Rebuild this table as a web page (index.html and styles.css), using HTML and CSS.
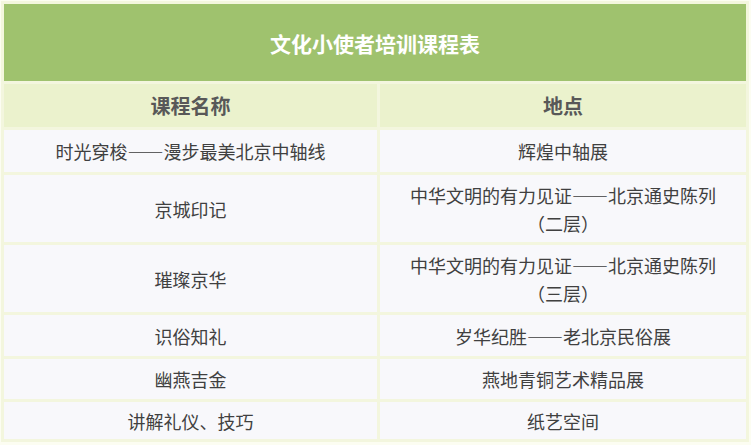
FILE: index.html
```html
<!DOCTYPE html>
<html lang="zh-CN">
<head>
<meta charset="utf-8">
<title>文化小使者培训课程表</title>
<link rel="stylesheet" href="styles.css">
</head>
<body>
<div class="wrap">
<table class="course">
  <colgroup><col class="c1"><col class="c2"></colgroup>
  <thead>
    <tr class="r-title"><th colspan="2" class="title">文化小使者培训课程表</th></tr>
    <tr class="r-head"><th class="head">课程名称</th><th class="head">地点</th></tr>
  </thead>
  <tbody>
    <tr class="r1"><td>时光穿梭——漫步最美北京中轴线</td><td>辉煌中轴展</td></tr>
    <tr class="r2"><td>京城印记</td><td>中华文明的有力见证——北京通史陈列<br>（二层）</td></tr>
    <tr class="r2"><td>璀璨京华</td><td>中华文明的有力见证——北京通史陈列<br>（三层）</td></tr>
    <tr class="r4"><td>识俗知礼</td><td>岁华纪胜——老北京民俗展</td></tr>
    <tr class="r5"><td>幽燕吉金</td><td>燕地青铜艺术精品展</td></tr>
    <tr class="r6"><td>讲解礼仪、技巧</td><td>纸艺空间</td></tr>
  </tbody>
</table>
</div>
</body>
</html>
```

FILE: styles.css
```css
html, body {
  margin: 0;
  padding: 0;
  background: #fcfdf2;
}
.wrap {
  padding: 1px 0 0 1px;
  width: 750px;
}
.course {
  border-collapse: separate;
  border-spacing: 3px;
  width: 748px;
  table-layout: fixed;
  font-family: "Noto Sans CJK SC", "Microsoft YaHei", sans-serif;
  background: #f3f6de;
}
.c1 { width: 373px; }
.c2 { width: 366px; }
.course th, .course td {
  padding: 0;
  text-align: center;
  vertical-align: middle;
}
.title {
  background: #9fc26e;
  color: #ffffff;
  font-size: 21px;
  font-weight: 700;
  height: 77px;
}
.head {
  background: #ebf2cd;
  color: #585858;
  font-size: 20px;
  font-weight: 700;
  height: 43px;
}
.course td {
  background: #f8f8fb;
  color: #404040;
  font-size: 18px;
  line-height: 28px;
}
.r1 td { height: 42px; }
.r2 td { height: 67px; }
.r4 td { height: 41px; }
.r5 td { height: 40px; }
.r6 td { height: 37px; }
```
